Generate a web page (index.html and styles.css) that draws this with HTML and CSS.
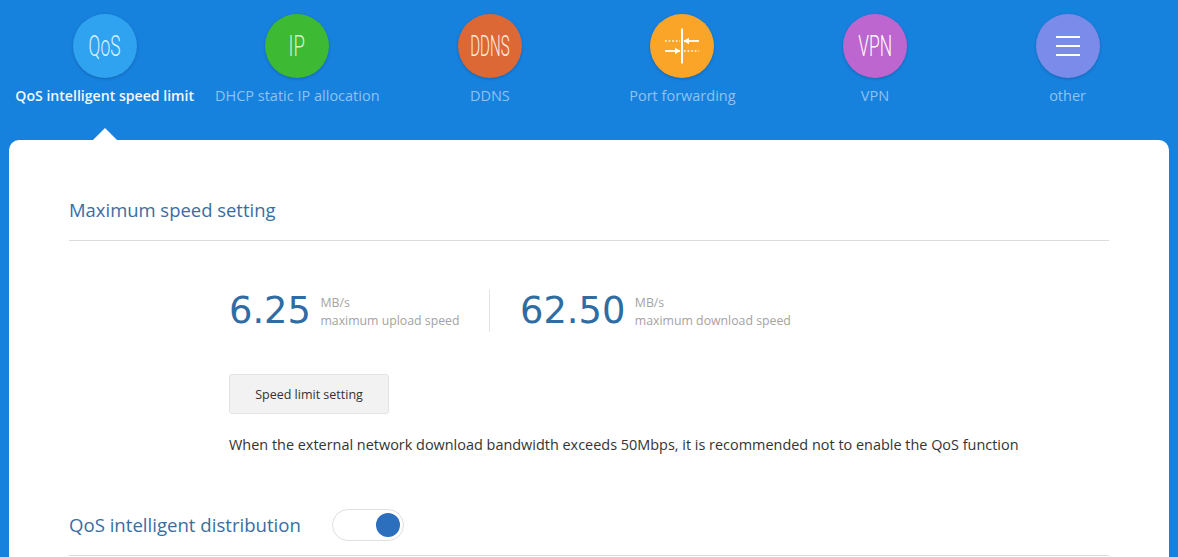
FILE: index.html
```html
<!DOCTYPE html>
<html lang="en">
<head>
<meta charset="utf-8">
<title>Router settings</title>
<link rel="stylesheet" href="styles.css">
</head>
<body>
<nav class="nav">
  <a class="tab active">
    <span class="circle c-qos"><span class="mark">QoS</span></span>
    <span class="label">QoS intelligent speed limit</span>
  </a>
  <a class="tab">
    <span class="circle c-ip"><span class="mark">IP</span></span>
    <span class="label">DHCP static IP allocation</span>
  </a>
  <a class="tab">
    <span class="circle c-ddns"><span class="mark">DDNS</span></span>
    <span class="label">DDNS</span>
  </a>
  <a class="tab">
    <span class="circle c-port">
      <svg class="icon" width="36" height="36" viewBox="0 0 36 36" fill="none" stroke="#fff">
        <path d="M18 0.5V35.5" stroke-width="2"/>
        <path d="M1 13H16" stroke-width="1.6" stroke-dasharray="1.6 2"/>
        <path d="M20 13H35" stroke-width="1.8"/>
        <path d="M25 9.8L19.5 13L25 16.2Z" fill="#fff" stroke="none"/>
        <path d="M1 23H16" stroke-width="1.8"/>
        <path d="M11 19.8L16.5 23L11 26.2Z" fill="#fff" stroke="none"/>
        <path d="M20 23H35" stroke-width="1.6" stroke-dasharray="1.6 2"/>
      </svg>
    </span>
    <span class="label">Port forwarding</span>
  </a>
  <a class="tab">
    <span class="circle c-vpn"><span class="mark">VPN</span></span>
    <span class="label">VPN</span>
  </a>
  <a class="tab">
    <span class="circle c-other">
      <svg class="icon" width="24" height="20" viewBox="0 0 24 20" fill="#fff">
        <rect x="0" y="0" width="24" height="2"/>
        <rect x="0" y="9" width="24" height="2"/>
        <rect x="0" y="18" width="24" height="2"/>
      </svg>
    </span>
    <span class="label">other</span>
  </a>
</nav>
<main class="card">
  <h2 class="title title-first">Maximum speed setting</h2>
  <section class="content">
    <div class="speeds">
      <div class="speed speed-up">
        <span class="value">6.25</span>
        <span class="meta"><span>MB/s</span><span>maximum upload speed</span></span>
      </div>
      <div class="speed speed-down">
        <span class="value">62.50</span>
        <span class="meta"><span>MB/s</span><span>maximum download speed</span></span>
      </div>
    </div>
    <button class="btn" type="button">Speed limit setting</button>
    <p class="note">When the external network download bandwidth exceeds 50Mbps, it is recommended not to enable the QoS function</p>
  </section>
  <div class="title title-row">
    <h2 class="title-text">QoS intelligent distribution</h2>
    <span class="toggle"><span class="knob"></span></span>
  </div>
</main>
</body>
</html>
```
FILE: styles.css
```css
* { box-sizing: border-box; }
html, body { height: 100%; }
body {
  margin: 0;
  height: 557px;
  overflow: hidden;
  background: #1781de;
  font-family: "Open Sans", "Noto Sans", sans-serif;
  color: #333;
}
.nav {
  display: flex;
  height: 140px;
  padding: 14px 14.2px 0 8.4px;
}
.tab {
  position: relative;
  flex: 1 1 0;
  display: flex;
  flex-direction: column;
  align-items: center;
  min-width: 0;
}
.tab.active::after {
  content: "";
  position: absolute;
  left: 50%;
  top: 114px;
  margin-left: -12px;
  border-left: 12px solid transparent;
  border-right: 12px solid transparent;
  border-bottom: 12px solid #fff;
}
.circle {
  width: 64px;
  height: 64px;
  border-radius: 50%;
  display: flex;
  align-items: center;
  justify-content: center;
  box-shadow: 0 1px 3px rgba(0, 0, 0, .2);
}
.c-qos { background: #2fa3f0; }
.c-ip { background: #3eb934; }
.c-ddns { background: #dc6835; }
.c-port { background: #fba528; }
.c-vpn { background: #bd66cf; }
.c-other { background: #7b8bea; }
.mark {
  font-family: "Roboto", sans-serif;
  font-weight: 300;
  font-size: 29px;
  line-height: 64px;
  color: #fff;
  transform: scaleX(.6);
  white-space: nowrap;
}
.c-qos .mark { color: #d8f1ff; }
.c-ip .mark { color: #d6f5c8; transform: scaleX(.64); }
.c-ddns .mark { color: #fff0e0; transform: scaleX(.52); }
.label {
  margin-top: 8px;
  font-size: 14.5px;
  line-height: 20px;
  color: #8ec3f2;
  white-space: nowrap;
}
.active .label { color: #f0f8ff; font-weight: 600; font-size: 14.1px; }
.card {
  height: 417px;
  margin: 0 9px;
  padding: 0 60px;
  background: #fff;
  border-radius: 10px 10px 0 0;
}
.title {
  border-bottom: 1px solid #dcdcdc;
  color: #3a6da3;
}
.title-first {
  margin: 0;
  height: 101px;
  padding-top: 57px;
  font-size: 18.45px;
  font-weight: 400;
  line-height: 26px;
}
.content { padding-left: 160px; }
.speeds {
  display: flex;
  margin-top: 49px;
  height: 42px;
}
.speed { display: flex; align-items: center; }
.speed-up {
  width: 261px;
  border-right: 1px solid #e2e2e2;
}
.speed-down { padding-left: 30px; }
.value {
  font-family: "DejaVu Sans", sans-serif;
  font-size: 36.8px;
  line-height: 42px;
  color: #2f6ca3;
}
.meta {
  display: flex;
  flex-direction: column;
  margin: 2px 0 0 9.5px;
  font-size: 12.3px;
  line-height: 18px;
  color: #a3a3a3;
}
.btn {
  display: block;
  width: 160px;
  height: 40px;
  margin-top: 42px;
  padding: 2px 0 0;
  border: 1px solid #e3e3e3;
  border-radius: 3px;
  background: #f2f2f2;
  font: 12.5px/36px "Open Sans", "Noto Sans", sans-serif;
  color: #333;
}
.note {
  margin: 20px 0 0;
  font-size: 14.44px;
  line-height: 22px;
  color: #333;
}
.title-row {
  display: flex;
  align-items: center;
  height: 47px;
  margin-top: 53px;
  padding-bottom: 14px;
}
.title-text {
  margin: 0;
  font-size: 18.6px;
  font-weight: 400;
  line-height: 26px;
}
.toggle {
  display: flex;
  align-items: center;
  justify-content: flex-end;
  width: 72px;
  height: 32px;
  margin: -1px 0 0 31px;
  padding-right: 3px;
  border: 1px solid #dfdfdf;
  border-radius: 16px;
  background: #fff;
}
.knob {
  width: 24px;
  height: 24px;
  border-radius: 50%;
  background: #2b6fbd;
}
```
